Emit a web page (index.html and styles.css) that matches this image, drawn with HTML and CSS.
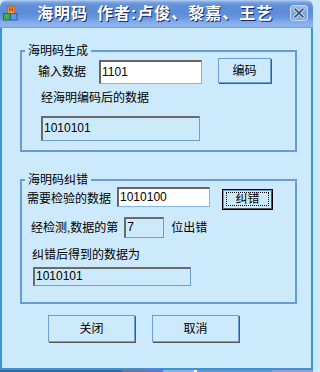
FILE: index.html
```html
<!DOCTYPE html>
<html lang="zh-CN">
<head>
<meta charset="utf-8">
<title>海明码</title>
<link rel="stylesheet" href="styles.css">
</head>
<body>
<div class="window">
  <div class="titlebar">
    <svg class="app-icon" viewBox="0 0 16 16" width="16" height="16" aria-hidden="true">
      <rect x="5.5" y="1.5" width="7" height="7" fill="#f2a44a" stroke="#b8702c" stroke-width="1"/>
      <text x="9" y="7.3" font-size="6.5" font-weight="bold" fill="#d42a1c" text-anchor="middle" font-family="Liberation Sans, sans-serif">H</text>
      <rect x="1.5" y="8.5" width="6.5" height="6.5" fill="#3fae4e" stroke="#227a30" stroke-width="1"/>
      <rect x="8.5" y="8.5" width="6.5" height="6.5" fill="#5a98e4" stroke="#2c62b0" stroke-width="1"/>
    </svg>
    <div class="title"><span>海明码</span><span class="title-authors">作者:卢俊、黎嘉、王艺</span></div>
    <div class="close-btn">
      <svg viewBox="0 0 18 16" width="16" height="14" aria-hidden="true">
        <path d="M4.5 3.5 L13.5 12.5 M13.5 3.5 L4.5 12.5" stroke="#e8f0fb" stroke-width="3.6" stroke-linecap="round"/>
        <path d="M4.5 3.5 L13.5 12.5 M13.5 3.5 L4.5 12.5" stroke="#34507c" stroke-width="2" stroke-linecap="round"/>
      </svg>
    </div>
  </div>

  <div class="client">
    <fieldset class="group group-encode">
      <legend>海明码生成</legend>
      <div class="row-input">
        <span class="lbl">输入数据</span>
        <input class="field field-data" value="1101">
        <button class="btn btn-encode">编码</button>
      </div>
      <div class="lbl lbl-encoded">经海明编码后的数据</div>
      <input class="field field-ro field-encoded" value="1010101" readonly>
    </fieldset>

    <fieldset class="group group-correct">
      <legend>海明码纠错</legend>
      <div class="row-check">
        <span class="lbl">需要检验的数据</span>
        <input class="field field-check" value="1010100">
        <button class="btn btn-default btn-correct"><span class="focus-ring">纠错</span></button>
      </div>
      <div class="row-pos">
        <span class="lbl">经检测,数据的第</span>
        <input class="field field-ro field-pos" value="7" readonly>
        <span class="lbl lbl-after">位出错</span>
      </div>
      <div class="lbl lbl-result">纠错后得到的数据为</div>
      <input class="field field-ro field-result" value="1010101" readonly>
    </fieldset>

    <div class="actions">
      <button class="btn btn-action">关闭</button>
      <button class="btn btn-action">取消</button>
    </div>
  </div>
</div>
<div class="strip">
  <span class="seg seg-1"></span>
  <span class="seg seg-2"></span>
  <span class="seg seg-3"></span>
  <span class="seg seg-4"></span>
  <span class="seg seg-5"></span>
  <span class="seg seg-6"></span>
  <span class="seg seg-7"></span>
</div>
</body>
</html>
```

FILE: styles.css
```css
* {
  box-sizing: border-box;
}

html,
body {
  margin: 0;
  padding: 0;
}

body {
  width: 313px;
  height: 372px;
  overflow: hidden;
  background: #cdeafd;
  font-family: "Liberation Sans", "Noto Sans CJK SC", sans-serif;
  font-size: 12px;
  color: #000;
}

.window {
  display: flex;
  flex-direction: column;
  height: 370px;
}

/* ---------- title bar ---------- */
.titlebar {
  flex: none;
  height: 28px;
  display: flex;
  align-items: center;
  padding: 0 5px 0 2px;
  border-radius: 7px 7px 0 0;
  background: linear-gradient(180deg,
    #b9d0f3 0px,
    #7fa6e3 2px,
    #5f90d8 5px,
    #5b8cd6 13px,
    #6898de 18px,
    #82abea 22px,
    #8db4ee 26px,
    #6e9ce0 28px);
}

.app-icon {
  flex: none;
  margin-bottom: 2px;
}

.title {
  margin-left: 19px;
  color: #fff;
  font-family: "Liberation Sans", "Noto Sans CJK SC", sans-serif;
  font-weight: bold;
  font-size: 16px;
  letter-spacing: 1px;
  line-height: 28px;
  white-space: nowrap;
  text-shadow: 1px 1px 0 #13266a;
}

.title-authors {
  margin-left: 9px;
}

.close-btn {
  margin-left: auto;
  margin-bottom: 2px;
  width: 18px;
  height: 16px;
  display: flex;
  align-items: center;
  justify-content: center;
  border: 1px solid #c6d8f3;
  border-radius: 3px;
  background: linear-gradient(180deg, #9ab9e6 0%, #7fa5dc 55%, #86acdf 100%);
}

/* ---------- client area ---------- */
.client {
  flex: 1;
  display: flex;
  flex-direction: column;
  align-items: flex-start;
  background: #cdeafd;
  border: 2px solid #3b93d4;
  border-top: 0;
  padding: 16px 14px 0 18px;
}

.group {
  width: 100%;
  margin: 0;
  padding: 0;
  min-width: 0;
  border: 2px solid #689cce;
}

.group legend {
  margin-left: 3px;
  padding: 0 3px;
  height: 14px;
  line-height: 14px;
  font-size: 12px;
}

.group-encode {
  padding-bottom: 9px;
}

.group-correct {
  margin-top: 21px;
  padding-bottom: 16px;
}

.lbl {
  line-height: 14px;
  white-space: nowrap;
}

/* fields */
.field {
  display: block;
  margin: 0;
  padding: 0 1px 2px 1px;
  font-family: "Liberation Sans", sans-serif;
  font-size: 12px;
  color: #000;
  background: #fff;
  border-style: solid;
  border-width: 2px 1px 1px 2px;
  border-color: #666 #82b6e8 #82b6e8 #666;
  border-radius: 0;
  outline: none;
}

.field-ro {
  background: transparent;
  border-color: #6a6a6a #6b9fd3 #6b9fd3 #6a6a6a;
}

/* buttons */
.btn {
  margin: 0;
  padding: 0;
  font-family: "Liberation Sans", "Noto Sans CJK SC", sans-serif;
  font-size: 12px;
  line-height: 14px;
  color: #000;
  background: #cdeafd;
  border: 1px solid #6b9fd3;
  border-radius: 0;
  box-shadow: 1px 1px 0 #585858;
}

.btn-default {
  border: 1px solid #000;
  box-shadow: inset 1px 1px 0 #6b9fd3, inset -1px -1px 0 #585858;
  padding: 2px 3px 3px 3px;
}

.focus-ring {
  display: flex;
  align-items: center;
  justify-content: center;
  height: 100%;
  border: 1px dotted #000;
}

/* group 1 rows */
.row-input {
  display: flex;
  align-items: center;
  height: 26px;
  margin-left: 16px;
}

.row-input .lbl {
  padding-top: 2px;
}

.field-data {
  align-self: flex-end;
  width: 103px;
  height: 24px;
  margin-left: 13px;
}

.btn-encode {
  align-self: flex-start;
  width: 53px;
  height: 25px;
  margin-left: 16px;
}

.lbl-encoded {
  margin: 7px 0 0 19px;
}

.field-encoded {
  width: 159px;
  height: 25px;
  margin: 11px 0 0 19px;
}

/* group 2 rows */
.row-check {
  display: flex;
  align-items: flex-start;
  margin-left: 5px;
}

.row-check .lbl {
  margin-top: 5px;
}

.field-check {
  width: 93px;
  height: 20px;
  margin-left: 6px;
}

.btn-correct {
  width: 51px;
  height: 21px;
  margin: 2px 0 0 12px;
}

.row-pos {
  display: flex;
  align-items: center;
  height: 21px;
  margin: 7px 0 0 9px;
}

.field-pos {
  width: 40px;
  height: 21px;
  margin-left: 6px;
}

.lbl-after {
  margin-left: 7px;
}

.lbl-result {
  margin: 10px 0 0 10px;
}

.field-result {
  width: 158px;
  height: 19px;
  margin: 5px 0 0 11px;
}

/* bottom buttons */
.actions {
  display: flex;
  gap: 17px;
  margin: 11px 0 0 28px;
}

.btn-action {
  width: 87px;
  height: 27px;
}

/* ---------- strip below the window ---------- */
.strip {
  display: flex;
  height: 2px;
}

.seg {
  display: block;
  height: 2px;
}

.seg-1 { width: 122px; background: #2f6ba2; }
.seg-2 { width: 27px; background: #77709f; }
.seg-3 { width: 14px; background: #6d6bd6; }
.seg-4 { width: 31px; background: #8fb4e3; }
.seg-5 { width: 3px; background: #ffffff; }
.seg-6 { width: 75px; background: #6296d6; }
.seg-7 { width: 41px; background: #a098d0; }
```
